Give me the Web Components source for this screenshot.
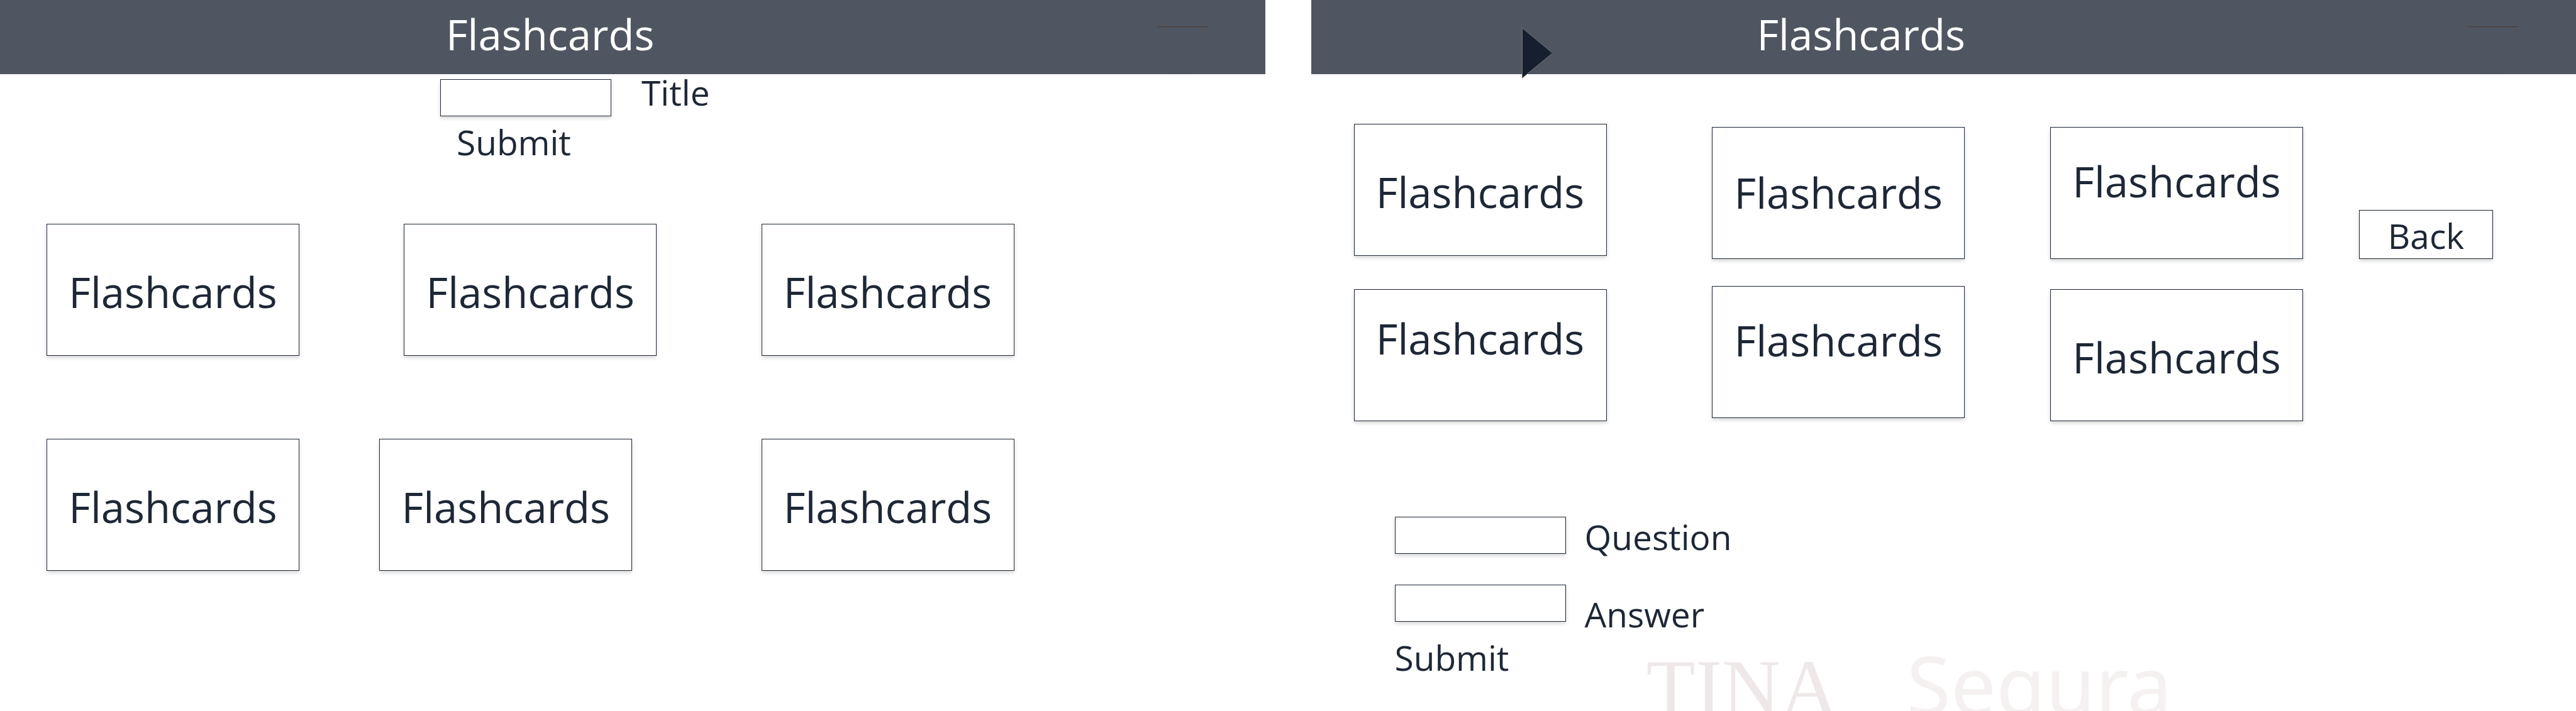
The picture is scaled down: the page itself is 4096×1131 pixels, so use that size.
<!DOCTYPE html>
<html lang="en">
<head>
<meta charset="utf-8">
<title>Flashcards</title>
<style>
  html, body { margin: 0; background: #fff; }
  body {
    --ink: #1e2736;
    --bar: #505661;
    --title: 67px;
    --text: 55px;
    color: var(--ink);
    font-family: "Open Sans", "Noto Sans", sans-serif;
  }
</style>
</head>
<body>
<flash-app></flash-app>

<script>
  class ShadowElement extends HTMLElement {
    constructor() {
      super();
      const template = document.createElement('template');
      template.innerHTML = this.constructor.markup;
      this.attachShadow({ mode: 'open' }).append(template.content.cloneNode(true));
    }
  }

  /* Top bar: heading and the menu lines */
  class AppBar extends ShadowElement {
    static markup = `
      <style>
        :host { display: block; position: relative; }
        header {
          display: flex; align-items: flex-start; box-sizing: border-box;
          height: 118px; padding: 8px 92px 0 709px;
          background: var(--bar); color: #fff;
        }
        h1 { margin: 0; font-size: var(--title); line-height: 92px; font-weight: 400; }
        svg { display: block; flex: none; margin: 34px 0 0 auto; }
      </style>
      <header>
        <h1><slot></slot></h1>
        <svg width="80" height="76" viewBox="0 0 80 76" aria-hidden="true">
          <path d="M0 .5H80" stroke="#4e3832"/>
          <path d="M15 40.5H62" stroke="#4d535e"/>
          <path d="M20 75.5H53" stroke="#4e545f"/>
        </svg>
      </header>
      <slot name="over"></slot>`;
  }

  /* Play arrow that hangs over the lower edge of the bar */
  class PlayArrow extends ShadowElement {
    static markup = `
      <style>
        :host { position: absolute; left: 335px; top: 43px; }
        button { display: block; margin: 0; padding: 0; border: 0; background: none; }
        svg { display: block; }
      </style>
      <button aria-label="Play">
        <svg width="50" height="83" viewBox="0 0 50 83">
          <path d="M.5 1.5V81L48.5 41.5Z" fill="#151f2f" stroke="#707070"/>
        </svg>
      </button>`;
  }

  class FlashCard extends ShadowElement {
    static markup = `
      <style>
        :host {
          display: block; box-sizing: border-box; flex: 0 1 402px; height: 210px;
          padding-top: 61px; border: 1px solid var(--ink); background: #fff;
          box-shadow: 0 3px 6px rgba(0, 0, 0, .16);
          font-size: var(--title); line-height: 92px; text-align: center; white-space: nowrap;
        }
        :host([level="mid"]) { padding-top: 57px; }
        :host([level="high"]) { padding-top: 39px; }
        :host([level="top"]) { padding-top: 31px; }
      </style>
      <slot></slot>`;
  }

  class CardRow extends ShadowElement {
    static markup = `
      <style>
        :host { display: flex; justify-content: space-between; align-items: flex-start; }
      </style>
      <slot></slot>`;
  }

  class TextField extends ShadowElement {
    static markup = `
      <style>
        :host { display: flex; align-items: flex-start; }
        input {
          box-sizing: border-box; flex: none; width: 272px; height: 59px; margin: 0; padding: 0 12px;
          border: 1px solid var(--ink); border-radius: 0; background: #fff; outline: 0;
          box-shadow: 0 3px 6px rgba(0, 0, 0, .16);
          font: 32px/40px "Open Sans", sans-serif; color: var(--ink);
          margin-top: var(--input-top, 0px);
        }
        label {
          font-size: var(--text); line-height: 56px;
          margin: var(--label-top, 0px) 0 0 var(--label-gap, 30px);
        }
      </style>
      <input id="field" type="text"><label for="field"><slot></slot></label>`;
  }

  class AppButton extends ShadowElement {
    static markup = `
      <style>
        :host { display: block; flex: none; }
        button {
          display: block; margin: 0; padding: 0; border: 0; background: none; color: inherit;
          font-family: inherit; font-size: var(--text); line-height: 56px;
        }
        :host([boxed]) button {
          box-sizing: border-box; width: 213px; height: 78px; padding: 12px 0 8px;
          border: 1px solid var(--ink); background: #fff;
          box-shadow: 0 3px 6px rgba(0, 0, 0, .16);
        }
      </style>
      <button type="button"><slot></slot></button>`;
  }

  /* Faint author signature, cut by the lower edge of the window */
  class AuthorMark extends ShadowElement {
    static markup = `
      <style>
        :host {
          display: flex; align-items: baseline; gap: 56px;
          font-size: 128px; line-height: 128px; white-space: nowrap;
        }
        .first { font-family: "Liberation Serif", serif; color: #efe8e8; flex: 0 0 358px; }
        .last { font-family: "Noto Sans", sans-serif; color: #f5f1f1; }
      </style>
      <span class="first">TINA</span><span class="last">Segura</span>`;
  }

  class DeckListPage extends ShadowElement {
    static markup = `
      <style>
        :host { display: block; }
        form { display: flex; flex-direction: column; align-items: flex-start; gap: 13px; padding-left: 700px; }
        text-field { --input-top: 8px; --label-top: 1px; --label-gap: 48px; }
        form app-button { margin-left: 26px; }
        .cards { display: flex; flex-direction: column; gap: 132px; padding: 102px 399px 0 74px; }
        .near { margin-right: 78px; }
      </style>
      <app-bar>Flashcards</app-bar>
      <form>
        <text-field>Title</text-field>
        <app-button>Submit</app-button>
      </form>
      <div class="cards">
        <card-row>
          <flash-card>Flashcards</flash-card>
          <flash-card>Flashcards</flash-card>
          <flash-card>Flashcards</flash-card>
        </card-row>
        <card-row>
          <flash-card>Flashcards</flash-card>
          <flash-card class="near">Flashcards</flash-card>
          <flash-card>Flashcards</flash-card>
        </card-row>
      </div>`;
  }

  class DeckPage extends ShadowElement {
    static markup = `
      <style>
        :host { display: block; }
        main { display: flex; align-items: flex-start; gap: 89px; padding: 79px 132px 0 68px; }
        .cards { display: flex; flex-direction: column; gap: 43px; flex: 1; }
        .mid { margin-left: 32px; }
        .low { margin-top: 5px; }
        main > app-button { margin-top: 137px; }
        form { display: flex; flex-direction: column; gap: 48px; padding: 152px 0 0 133px; }
        .question { --label-top: 4px; }
        .answer { --label-top: 19px; }
        footer { display: flex; align-items: flex-start; justify-content: flex-start; padding: 13px 0 0 133px; }
        footer app-button { flex: 0 0 400px; }
        author-mark { margin-top: 6px; }
      </style>
      <app-bar>Flashcards<play-arrow slot="over"></play-arrow></app-bar>
      <main>
        <div class="cards">
          <card-row>
            <flash-card>Flashcards</flash-card>
            <flash-card class="mid low" level="mid">Flashcards</flash-card>
            <flash-card class="low" level="high">Flashcards</flash-card>
          </card-row>
          <card-row>
            <flash-card class="low" level="top">Flashcards</flash-card>
            <flash-card class="mid" level="high">Flashcards</flash-card>
            <flash-card class="low">Flashcards</flash-card>
          </card-row>
        </div>
        <app-button boxed>Back</app-button>
      </main>
      <form>
        <text-field class="question">Question</text-field>
        <text-field class="answer">Answer</text-field>
      </form>
      <footer>
        <app-button>Submit</app-button>
        <author-mark></author-mark>
      </footer>`;
  }

  class FlashApp extends ShadowElement {
    static markup = `
      <style>
        :host { display: flex; gap: 73px; height: 100vh; overflow: hidden; }
        deck-list-page, deck-page { flex: 1 1 0; min-width: 0; }
      </style>
      <deck-list-page></deck-list-page>
      <deck-page></deck-page>`;
  }

  customElements.define('app-bar', AppBar);
  customElements.define('play-arrow', PlayArrow);
  customElements.define('flash-card', FlashCard);
  customElements.define('card-row', CardRow);
  customElements.define('text-field', TextField);
  customElements.define('app-button', AppButton);
  customElements.define('author-mark', AuthorMark);
  customElements.define('deck-list-page', DeckListPage);
  customElements.define('deck-page', DeckPage);
  customElements.define('flash-app', FlashApp);
</script>
</body>
</html>
